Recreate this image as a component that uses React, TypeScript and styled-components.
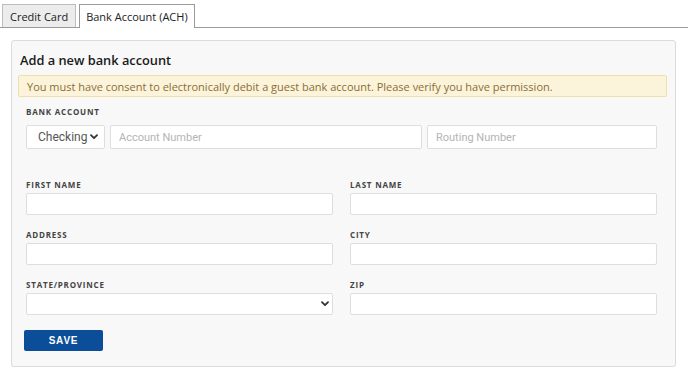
import React from "react";
import styled, { createGlobalStyle } from "styled-components";

const Global = createGlobalStyle`
  html, body { margin: 0; padding: 0; background: #ffffff; }
  body { font-family: "Open Sans", "Liberation Sans", sans-serif; color: #222; }
  * { box-sizing: border-box; }
`;

const Page = styled.div`
  width: 688px;
  padding-top: 4px;
`;

const TabBar = styled.div`
  display: flex;
  align-items: flex-end;
  gap: 3px;
  padding-left: 2px;
  border-bottom: 1px solid #9a9a9a;
  height: 24px;
`;

const Tab = styled.div<{ $active?: boolean }>`
  display: flex;
  align-items: center;
  padding: 0 ${(p) => (p.$active ? "6px" : "7px")};
  font-size: 11px;
  color: #222;
  border: 1px solid ${(p) => (p.$active ? "#9a9a9a" : "#bdbdbd")};
  border-bottom: none;
  background: ${(p) => (p.$active ? "#ffffff" : "#ececec")};
  margin-bottom: ${(p) => (p.$active ? "-1px" : "0")};
  height: ${(p) => (p.$active ? "24px" : "23px")};
`;

const Panel = styled.div`
  margin: 12px 12px 0 11px;
  height: 327px;
  border: 1px solid #dcdcdc;
  border-radius: 3px;
  background: #f8f8f8;
  box-shadow: 0 1px 1px rgba(0, 0, 0, 0.05);
  padding: 11px 8px 0 6px;
`;

const Heading = styled.h2`
  margin: 0 0 6px 2px;
  font-size: 12.8px;
  line-height: 17px;
  font-weight: 600;
  color: #1a1a1a;
`;

const Warning = styled.div`
  height: 22px;
  display: flex;
  align-items: center;
  padding: 0 8px;
  background: #fcf4da;
  border: 1px solid #efdfa9;
  border-radius: 2px;
  font-size: 11px;
  color: #8a6d35;
`;

const Form = styled.div`
  padding: 10px 10px 0 8px;
  display: flex;
  flex-direction: column;
`;

const Label = styled.div`
  font-size: 8px;
  line-height: 10px;
  font-weight: 700;
  letter-spacing: 0.8px;
  color: #444;
  text-transform: uppercase;
`;

const BankRow = styled.div`
  display: flex;
  gap: 5px;
  margin-top: 8px;
`;

const Control = styled.input<{ $w?: string }>`
  height: 24px;
  width: ${(p) => p.$w || "100%"};
  flex: ${(p) => (p.$w ? "none" : "1")};
  border: 1px solid #dedede;
  border-radius: 2px;
  background: #ffffff;
  padding: 0 8px;
  font-family: Roboto, "Liberation Sans", sans-serif;
  font-size: 11px;
  color: #444;
  outline: none;
  &::placeholder { color: #b4b4b4; }
`;

const SelectWrap = styled.div<{ $w?: string }>`
  position: relative;
  width: ${(p) => p.$w || "100%"};
  flex: none;
`;

const SelectBox = styled.select<{ $h?: number }>`
  appearance: none;
  -webkit-appearance: none;
  display: block;
  width: 100%;
  height: ${(p) => p.$h || 22}px;
  border: 1px solid #dedede;
  border-radius: 2px;
  background: #ffffff;
  padding: 0 0 0 11px;
  font-family: Roboto, "Liberation Sans", sans-serif;
  font-size: 12px;
  color: #555;
  outline: none;
`;

const Chevron = styled.svg<{ $right: number }>`
  position: absolute;
  right: ${(p) => p.$right}px;
  top: 50%;
  transform: translateY(-50%);
  pointer-events: none;
`;

const Grid = styled.div`
  margin-top: 31px;
  display: grid;
  grid-template-columns: 1fr 1fr;
  column-gap: 17px;
  row-gap: 15px;
`;

const Field = styled.div`
  display: flex;
  flex-direction: column;
  gap: 3px;
`;

const TextInput = styled.input`
  display: block;
  height: 22px;
  width: 100%;
  border: 1px solid #dedede;
  border-radius: 2px;
  background: #ffffff;
  outline: none;
`;

const Actions = styled.div`
  display: flex;
  margin-top: 15px;
`;

const SaveButton = styled.button`
  margin-left: -2px;
  width: 79px;
  height: 21px;
  border: none;
  border-radius: 2px;
  background: #0b4d98;
  color: #ffffff;
  font-family: "Liberation Sans", Arial, sans-serif;
  font-size: 10px;
  font-weight: 700;
  letter-spacing: 0.8px;
`;

const ChevronIcon = ({ right }: { right: number }) => (
  <Chevron $right={right} width="8" height="6" viewBox="0 0 8 6">
    <path d="M1 1.2 L4 4.2 L7 1.2" fill="none" stroke="#333" strokeWidth="1.8" strokeLinecap="round" strokeLinejoin="round" />
  </Chevron>
);

export default function App() {
  return (
    <Page>
      <Global />
      <TabBar>
        <Tab>Credit Card</Tab>
        <Tab $active>Bank Account (ACH)</Tab>
      </TabBar>
      <Panel>
        <Heading>Add a new bank account</Heading>
        <Warning>
          You must have consent to electronically debit a guest bank account. Please verify you have permission.
        </Warning>
        <Form>
          <Label>Bank Account</Label>
          <BankRow>
            <SelectWrap $w="79px">
              <SelectBox $h={24} defaultValue="checking">
                <option value="checking">Checking</option>
                <option value="savings">Savings</option>
              </SelectBox>
              <ChevronIcon right={7} />
            </SelectWrap>
            <Control placeholder="Account Number" />
            <Control $w="230px" placeholder="Routing Number" />
          </BankRow>
          <Grid>
            <Field>
              <Label>First Name</Label>
              <TextInput />
            </Field>
            <Field>
              <Label>Last Name</Label>
              <TextInput />
            </Field>
            <Field>
              <Label>Address</Label>
              <TextInput />
            </Field>
            <Field>
              <Label>City</Label>
              <TextInput />
            </Field>
            <Field>
              <Label>State/Province</Label>
              <SelectWrap>
                <SelectBox defaultValue="">
                  <option value=""></option>
                </SelectBox>
                <ChevronIcon right={4} />
              </SelectWrap>
            </Field>
            <Field>
              <Label>Zip</Label>
              <TextInput />
            </Field>
          </Grid>
          <Actions>
            <SaveButton>SAVE</SaveButton>
          </Actions>
        </Form>
      </Panel>
    </Page>
  );
}
